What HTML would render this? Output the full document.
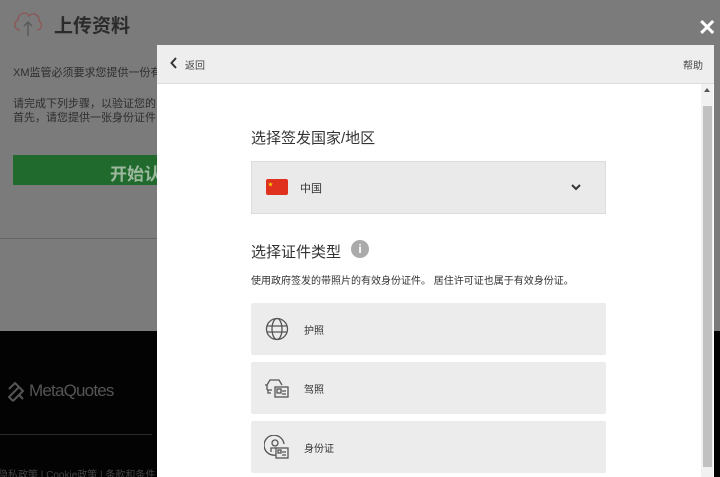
<!DOCTYPE html><html><head><meta charset="utf-8"><style>
html,body{margin:0;width:720px;height:477px;overflow:hidden}
body{position:relative;background:#777;font-family:"Liberation Sans","Noto Sans CJK SC",sans-serif}
.a{position:absolute}
</style></head><body>
<div class="a" style="left:0;top:0;width:720px;height:331px;background:#7b7b7b"></div>
<svg class="a" style="left:12px;top:8px" width="32" height="30" viewBox="0 0 32 30"><path d="M8 22 C2 22 1 14 6 12 C6 5 14 3 17 8 C20 4 28 6 27 13 C31 15 30 22 25 22" fill="none" stroke="#8a5a5a" stroke-width="1.5"/><path d="M16 28 V14 M12 18 L16 14 L20 18" fill="none" stroke="#5a5a5a" stroke-width="1.5"/></svg>
<div class="a" style="left:54px;top:11px;font-size:19px;font-weight:bold;color:#2b2b2b">上传资料</div>
<div class="a" style="left:13px;top:64px;font-size:11px;color:#2e2e2e">XM监管必须要求您提供一份有</div>
<div class="a" style="left:13px;top:97px;font-size:11px;color:#2e2e2e;line-height:14px">请完成下列步骤，以验证您的<br>首先，请您提供一张身份证件</div>
<div class="a" style="left:13px;top:155px;width:150px;height:30px;background:#1f6a2c"></div>
<div class="a" style="left:110px;top:160px;font-size:17px;font-weight:bold;color:#9cb99e">开始认</div>
<div class="a" style="left:0;top:238px;width:157px;height:1px;background:#666"></div>
<div class="a" style="left:0;top:331px;width:720px;height:146px;background:#030303"></div>
<svg class="a" style="left:6px;top:381px" width="20" height="22" viewBox="0 0 20 22"><path d="M3 8 L9 2 L13 6 M7 20 L17 10 L13 6 L3 16 L7 20 M13 14 L17 18" fill="none" stroke="#555" stroke-width="2"/></svg>
<div class="a" style="left:29px;top:381px;font-size:17px;color:#555;letter-spacing:-0.8px">MetaQuotes</div>
<div class="a" style="left:0;top:434px;width:152px;height:1px;background:#2a2a2a"></div>
<div class="a" style="left:-2px;top:466px;font-size:10px;color:#444">隐私政策 | Cookie政策 | 条款和条件</div>
<div class="a" style="left:698px;top:17px;font-size:22px;font-weight:bold;color:#fff;line-height:22px">✕</div>
<div class="a" style="left:157px;top:45px;width:557px;height:432px;background:#fff"></div>
<div class="a" style="left:157px;top:45px;width:557px;height:38px;background:#eeeeee;border-bottom:1px solid #ddd"></div>
<svg class="a" style="left:170px;top:57px" width="8" height="12" viewBox="0 0 8 12"><path d="M6 1 L1.5 6 L6 11" fill="none" stroke="#333" stroke-width="2"/></svg>
<div class="a" style="left:185px;top:57px;font-size:10px;color:#444">返回</div>
<div class="a" style="left:683px;top:57px;font-size:10px;color:#444">帮助</div>
<div class="a" style="left:701px;top:84px;width:12px;height:393px;background:#f1f1f1"></div>
<div class="a" style="left:704px;top:88px;width:0;height:0;border-left:3px solid transparent;border-right:3px solid transparent;border-bottom:4px solid #555"></div>
<div class="a" style="left:703px;top:106px;width:9px;height:361px;background:#c1c1c1"></div>
<div class="a" style="left:251px;top:127px;font-size:15px;color:#333">选择签发国家/地区</div>
<div class="a" style="left:251px;top:161px;width:353px;height:51px;background:#eaeaea;border:1px solid #dcdcdc"></div>
<div class="a" style="left:266px;top:179px;width:22px;height:16px;background:#e0301e;border-radius:2px"></div>
<div class="a" style="left:268px;top:181px;font-size:5px;color:#ffde00">★</div>
<div class="a" style="left:300px;top:180px;font-size:11px;color:#333">中国</div>
<svg class="a" style="left:571px;top:184px" width="10" height="7" viewBox="0 0 10 7"><path d="M1 1 L5 5 L9 1" fill="none" stroke="#333" stroke-width="2"/></svg>
<div class="a" style="left:251px;top:241px;font-size:15px;color:#333">选择证件类型</div>
<div class="a" style="left:351px;top:240px;width:18px;height:18px;border-radius:50%;background:#aaa;color:#fff;font-size:12px;font-weight:bold;text-align:center;line-height:18px">i</div>
<div class="a" style="left:251px;top:272px;font-size:10px;color:#333">使用政府签发的带照片的有效身份证件。 居住许可证也属于有效身份证。</div>
<div class="a" style="left:251px;top:303px;width:355px;height:52px;background:#ececec;border-radius:2px"></div>
<div class="a" style="left:251px;top:362px;width:355px;height:52px;background:#ececec;border-radius:2px"></div>
<div class="a" style="left:251px;top:421px;width:355px;height:52px;background:#ececec;border-radius:2px"></div>
<svg class="a" style="left:265px;top:317px" width="24" height="24" viewBox="0 0 24 24" fill="none" stroke="#555" stroke-width="1.3"><circle cx="12" cy="12" r="10.5"/><ellipse cx="12" cy="12" rx="5" ry="10.5"/><path d="M2 9 H22 M2 15 H22"/></svg>
<div class="a" style="left:304px;top:322px;font-size:10px;color:#333">护照</div>
<svg class="a" style="left:264px;top:376px" width="26" height="24" viewBox="0 0 26 24" fill="none" stroke="#555" stroke-width="1.3"><path d="M3 14 V9 L6 4 H15 L18 9 M1 9 H3 M3 14 H8 M4 14 V17 H7"/><rect x="11" y="11" width="13" height="10"/><rect x="13" y="13" width="4" height="4"/><path d="M18 15 H22 M18 18 H22"/></svg>
<div class="a" style="left:304px;top:381px;font-size:10px;color:#333">驾照</div>
<svg class="a" style="left:264px;top:435px" width="26" height="25" viewBox="0 0 26 25" fill="none" stroke="#555" stroke-width="1.3"><path d="M12 20 A10 10 0 1 1 20 9"/><circle cx="11" cy="8" r="3"/><path d="M7 17 V13 H13"/><rect x="12" y="13" width="12" height="10"/><rect x="14" y="15" width="3" height="3"/><path d="M18 17 H22 M18 20 H22"/></svg>
<div class="a" style="left:304px;top:440px;font-size:10px;color:#333">身份证</div>
</body></html>
